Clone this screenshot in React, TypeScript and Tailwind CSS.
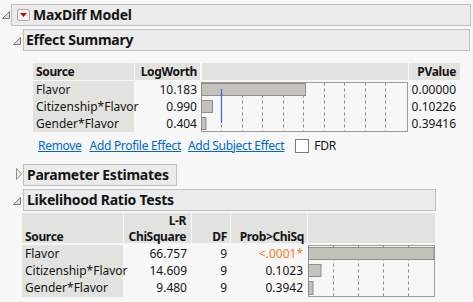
import React from "react";

const OpenTri = () => (
  <svg width="9" height="9" viewBox="0 0 9 9">
    <polygon points="7.5,0.5 7.5,7.5 0.5,7.5" fill="#dcdcdc" stroke="#7c7c7c" strokeWidth="1" />
  </svg>
);

const ClosedTri = () => (
  <svg width="7" height="13" viewBox="0 0 7 13">
    <polygon points="0.5,0.5 5.5,6 0.5,11.5" fill="#f6f6f6" stroke="#8a8a8a" strokeWidth="1" />
  </svg>
);

const RedBtn = () => (
  <div className="w-[13px] h-[12px] border border-[#a8a8a8] rounded-[2px] bg-[#f4f4f4] flex items-center justify-center">
    <svg width="7" height="4" viewBox="0 0 7 4">
      <polygon points="0,0 7,0 3.5,4" fill="#d40000" />
    </svg>
  </div>
);

const EffectChart = () => {
  const grid = Array.from({ length: 9 }, (_, k) => Math.floor(20.5 * (k + 1)) + 0.5);
  return (
    <svg width="207" height="51" viewBox="0 0 207 51">
      <rect x="0.5" y="1.5" width="206" height="49" fill="none" stroke="#9c9c94" />
      {grid.map((x) => (
        <line key={x} x1={x} y1={1.5} x2={x} y2={50} stroke="#8a8a84" strokeDasharray="3 3" />
      ))}
      <rect x="0.5" y="2.5" width="104" height="12" fill="#c3c3bb" stroke="#8f8f87" />
      <rect x="0.5" y="19.5" width="11" height="12" fill="#c3c3bb" stroke="#8f8f87" />
      <rect x="0.5" y="36.5" width="4.5" height="12" fill="#c3c3bb" stroke="#8f8f87" />
      <line x1="20.5" y1="8" x2="20.5" y2="42" stroke="#3366ff" strokeWidth="1.2" />
    </svg>
  );
};

const LrtChart = () => {
  const grid = [25.5, 50.5, 75.5, 100.5];
  return (
    <svg width="127" height="52" viewBox="0 0 127 52">
      <rect x="0.5" y="0.5" width="126" height="51" fill="none" stroke="#9c9c94" />
      {grid.map((x) => (
        <line key={x} x1={x} y1={0.5} x2={x} y2={51} stroke="#8a8a84" strokeDasharray="3 3" />
      ))}
      <rect x="0.5" y="2.5" width="125.5" height="12" fill="#c3c3bb" stroke="#8f8f87" />
      <rect x="0.5" y="19.5" width="12.5" height="12" fill="#c3c3bb" stroke="#8f8f87" />
      <rect x="0.5" y="36.5" width="4.5" height="13" fill="#c3c3bb" stroke="#8f8f87" />
    </svg>
  );
};

const headCls = "bg-[#e2e2de] font-bold tracking-[-0.35px] whitespace-nowrap";
const rowCls = "h-[17px] flex items-center whitespace-nowrap";
const titleCls = "text-[14px] font-bold tracking-[-0.25px] whitespace-nowrap";

export default function App() {
  const effRows = [
    ["Flavor", "10.183", "0.00000"],
    ["Citizenship*Flavor", "0.990", "0.10226"],
    ["Gender*Flavor", "0.404", "0.39416"],
  ];
  const lrtRows = [
    ["Flavor", "66.757", "9", "<.0001*"],
    ["Citizenship*Flavor", "14.609", "9", "0.1023"],
    ["Gender*Flavor", "9.480", "9", "0.3942"],
  ];
  return (
    <div className="w-[473px] h-[302px] bg-[#f7f7f7] overflow-hidden text-[#141414] font-['Noto_Sans',sans-serif] text-[12px] leading-none">
      {/* MaxDiff Model */}
      <div className="pt-[4px] flex items-start">
        <div className="w-[11px] pl-[2px] pt-[7px]">
          <OpenTri />
        </div>
        <div className="w-[460px] h-[22px] border border-[#c0c0c0] bg-[#ebebeb] flex items-center pl-[5px]">
          <RedBtn />
          <span className={`ml-[3px] ${titleCls}`}>MaxDiff Model</span>
        </div>
      </div>

      {/* Effect Summary */}
      <div className="mt-[3px] pl-[13px] flex items-start">
        <div className="w-[10px] pt-[8px]">
          <OpenTri />
        </div>
        <div className="w-[447px] h-[22px] border border-[#c0c0c0] bg-[#ebebeb] flex items-center pl-[2px]">
          <span className={titleCls}>Effect Summary</span>
        </div>
      </div>

      <div className="mt-[12px] ml-[33px] flex gap-[1px]">
        <div className="w-[101px]">
          <div className={`${headCls} h-[17px] flex items-center pl-[3px]`}>Source</div>
          <div className="mt-[1px] bg-[#e2e2de] h-[51px]">
            {effRows.map((r) => (
              <div key={r[0]} className={`${rowCls} pl-[3px]`}>{r[0]}</div>
            ))}
          </div>
        </div>
        <div className="w-[65px]">
          <div className={`${headCls} h-[17px] flex items-center justify-end pr-[3px]`}>LogWorth</div>
          <div className="mt-[1px] h-[51px]">
            {effRows.map((r) => (
              <div key={r[0]} className={`${rowCls} justify-end pr-[3px]`}>{r[1]}</div>
            ))}
          </div>
        </div>
        <div className="w-[207px]">
          <div className="bg-[#e2e2de] h-[17px] ml-[1px]"></div>
          <div className="mt-[1px]">
            <EffectChart />
          </div>
        </div>
        <div className="w-[51px]">
          <div className={`${headCls} h-[17px] flex items-center justify-end pr-[4px]`}>PValue</div>
          <div className="mt-[1px] h-[51px]">
            {effRows.map((r) => (
              <div key={r[0]} className={`${rowCls} justify-end pr-[4px]`}>{r[2]}</div>
            ))}
          </div>
        </div>
      </div>

      {/* links */}
      <div className="mt-[6px] h-[15px] ml-[38px] flex items-center text-[#0066cc] whitespace-nowrap tracking-[-0.3px]">
        <span className="underline">Remove</span>
        <span className="underline ml-[8px]">Add Profile Effect</span>
        <span className="underline ml-[7px]">Add Subject Effect</span>
        <span className="ml-[11px] w-[14px] h-[14px] border border-[#7a7a7a] bg-white"></span>
        <span className="ml-[5px] text-[#141414]">FDR</span>
      </div>

      {/* Parameter Estimates */}
      <div className="mt-[11px] pl-[16px] flex items-start">
        <div className="w-[7px] pt-[4px]">
          <ClosedTri />
        </div>
        <div className="w-[154px] h-[22px] border border-[#c0c0c0] bg-[#ebebeb] flex items-center pl-[3px]">
          <span className={titleCls}>Parameter Estimates</span>
        </div>
      </div>

      {/* Likelihood Ratio Tests */}
      <div className="mt-[3px] pl-[13px] flex items-start">
        <div className="w-[10px] pt-[8px]">
          <OpenTri />
        </div>
        <div className="w-[413px] h-[22px] border border-[#c0c0c0] bg-[#ebebeb] flex items-center pl-[3px]">
          <span className={titleCls}>Likelihood Ratio Tests</span>
        </div>
      </div>

      <div className="mt-[2px] ml-[22px] flex gap-[1px]">
        <div className="w-[101px]">
          <div className={`${headCls} h-[30px] flex items-end pb-[0px] pl-[3px]`}>Source</div>
          <div className="mt-[2px] bg-[#e2e2de] h-[52px]">
            {lrtRows.map((r) => (
              <div key={r[0]} className={`${rowCls} pl-[3px]`}>{r[0]}</div>
            ))}
          </div>
        </div>
        <div className="w-[67px]">
          <div className={`${headCls} h-[30px] flex flex-col items-end justify-end pb-[0px] pr-[5px] gap-[4px]`}>
            <span>L-R</span>
            <span>ChiSquare</span>
          </div>
          <div className="mt-[2px] h-[52px]">
            {lrtRows.map((r) => (
              <div key={r[0]} className={`${rowCls} justify-end pr-[4px]`}>{r[1]}</div>
            ))}
          </div>
        </div>
        <div className="w-[38px]">
          <div className={`${headCls} h-[30px] flex items-end justify-end pb-[0px] pr-[3px]`}>DF</div>
          <div className="mt-[2px] h-[52px]">
            {lrtRows.map((r) => (
              <div key={r[0]} className={`${rowCls} justify-end pr-[3px]`}>{r[2]}</div>
            ))}
          </div>
        </div>
        <div className="w-[76px]">
          <div className={`${headCls} h-[30px] flex items-end justify-end pb-[0px] pr-[3px]`}>Prob&gt;ChiSq</div>
          <div className="mt-[2px] h-[52px]">
            {lrtRows.map((r, i) => (
              <div key={r[0]} className={`${rowCls} justify-end pr-[4px] ${i === 0 ? "text-[#ef7d22]" : ""}`}>{r[3]}</div>
            ))}
          </div>
        </div>
        <div className="w-[127px]">
          <div className="bg-[#e2e2de] h-[30px]"></div>
          <div className="mt-[2px]">
            <LrtChart />
          </div>
        </div>
      </div>
    </div>
  );
}
